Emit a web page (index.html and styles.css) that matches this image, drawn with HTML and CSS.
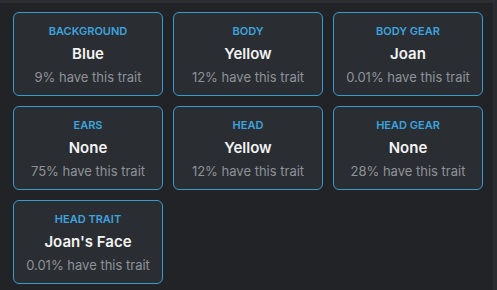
FILE: index.html
```html
<!DOCTYPE html>
<html lang="en">
<head>
    <meta charset="UTF-8">
    <meta name="viewport" content="width=device-width, initial-scale=1.0">
    <title>Traits</title>
    <link rel="stylesheet" href="styles.css">
</head>
<body>
    <div id="traits-panel">
        <div class="trait-grid">
            <div class="trait-card">
                <div class="trait-type">Background</div>
                <div class="trait-value">Blue</div>
                <div class="trait-rarity">9% have this trait</div>
            </div>
            <div class="trait-card">
                <div class="trait-type">Body</div>
                <div class="trait-value">Yellow</div>
                <div class="trait-rarity">12% have this trait</div>
            </div>
            <div class="trait-card">
                <div class="trait-type">Body Gear</div>
                <div class="trait-value">Joan</div>
                <div class="trait-rarity">0.01% have this trait</div>
            </div>
            <div class="trait-card">
                <div class="trait-type">Ears</div>
                <div class="trait-value">None</div>
                <div class="trait-rarity">75% have this trait</div>
            </div>
            <div class="trait-card">
                <div class="trait-type">Head</div>
                <div class="trait-value">Yellow</div>
                <div class="trait-rarity">12% have this trait</div>
            </div>
            <div class="trait-card">
                <div class="trait-type">Head Gear</div>
                <div class="trait-value">None</div>
                <div class="trait-rarity">28% have this trait</div>
            </div>
            <div class="trait-card">
                <div class="trait-type">Head Trait</div>
                <div class="trait-value">Joan's Face</div>
                <div class="trait-rarity">0.01% have this trait</div>
            </div>
        </div>
    </div>
</body>
</html>
```

FILE: styles.css
```css
body {
  font-family: "Inter", "Open Sans", sans-serif;
  background-color: #222327;
  margin: 0;
  padding: 0;
}

#traits-panel {
  height: 290px;
  box-sizing: border-box;
  border-top: 3px solid #2c2e32;
  border-right: 4px solid #2a2c30;
  padding: 9px 10px 0 13px;
}

.trait-grid {
  display: grid;
  grid-template-columns: repeat(3, 150px);
  grid-auto-rows: 84px;
  gap: 10px;
}

.trait-card {
  display: flex;
  flex-direction: column;
  align-items: center;
  box-sizing: border-box;
  padding-top: 11px;
  background-color: #2a2e33;
  border: 1px solid #3a9ccc;
  border-radius: 6px;
  text-align: center;
}

.trait-type {
  font-size: 11px;
  font-weight: 600;
  text-transform: uppercase;
  color: #3da3df;
  line-height: 14px;
}

.trait-value {
  margin-top: 6px;
  font-size: 15px;
  font-weight: 600;
  color: #f2f2f2;
  line-height: 20px;
}

.trait-rarity {
  margin-top: 4px;
  font-size: 13px;
  color: #8e9297;
  line-height: 18px;
}
```
